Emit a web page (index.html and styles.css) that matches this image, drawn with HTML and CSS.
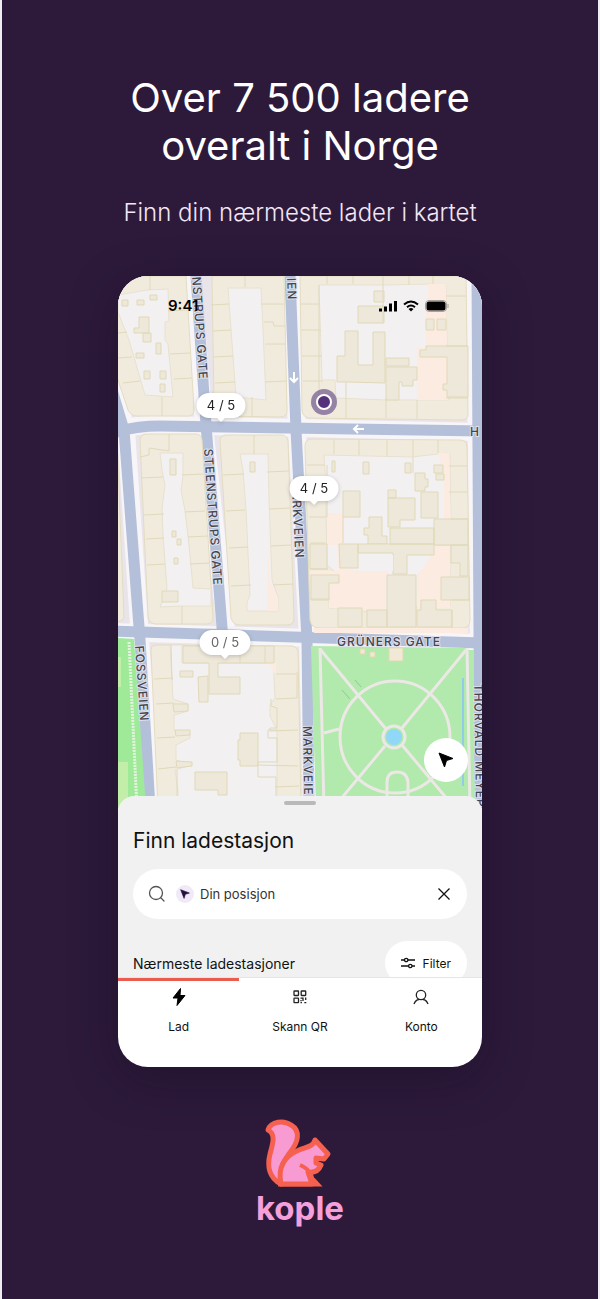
FILE: index.html
```html
<!DOCTYPE html>
<html lang="no">
<head>
    <meta charset="UTF-8">
    <meta name="viewport" content="width=device-width, initial-scale=1.0">
    <title>Kople - Over 7 500 ladere overalt i Norge</title>
    <link rel="stylesheet" href="styles.css">
</head>
<body>
    <main class="poster">
        <header class="intro">
            <h1>Over 7 500 ladere<br>overalt i Norge</h1>
            <p>Finn din nærmeste lader i kartet</p>
        </header>

        <section class="phone">
            <div class="map">
                <svg class="map-canvas" viewBox="118 276 364 532" aria-label="Kart">
                    <!-- ground and streets -->
                    <rect x="118" y="276" width="364" height="532" fill="#e9e4ea"/>
                    <g fill="none" stroke="#f8f5f8" stroke-width="18">
                        <path d="M192 276L204 425L227 640"/>
                        <path d="M291 276L297 430L308 640L312 808"/>
                        <path d="M112 380L126 430L140 640L153 808"/>
                        <path d="M110 432Q135 424 160 425L482 432"/>
                        <path d="M110 632L482 643"/>
                        <path d="M475 276L479 650"/>
                    </g>
                    <g fill="none" stroke="#b4c0d9" stroke-width="11">
                        <path d="M196 276L206 425L223 640"/>
                        <path d="M290 276L296 430L307 640L309 808"/>
                        <path d="M112 390L124 430L140 640L150 808"/>
                        <path d="M110 434Q132 426 160 426L482 431"/>
                        <path d="M110 631L482 643"/>
                        <path d="M477 276L480 808"/>
                    </g>

                    <!-- city blocks -->
                    <g fill="#f1ebde" stroke="#e3dcc0" stroke-width="1">
                        <path d="M116 276H186L194 409Q194 416 188 416H137Q131 416 128 410L116 374Z"/>
                        <path d="M212 276H284L287 410Q287 417 280 417L222 416Q215 415 214 406Z"/>
                        <path d="M300 276H466L468 414Q468 420 461 420L309 418Q303 417 302 411Z"/>
                        <path d="M140 440Q140 434 147 434H196Q201 434 202 440L213 618Q213 624 206 624H156Q149 624 148 616Z"/>
                        <path d="M220 441Q220 435 227 435H281Q287 435 288 441L294 618Q294 625 287 625H240Q233 625 231 618Z"/>
                        <path d="M305 446Q305 439 312 439L460 440Q467 440 467 447L470 620Q470 628 462 628H320Q311 628 310 620Z"/>
                        <path d="M151 650Q151 645 157 645L292 646Q298 647 298 653L301 808H158Z"/>
                        <path d="M112 440H117L124 617Q124 622 112 622Z"/>
                    </g>

                    <!-- courtyards -->
                    <g fill="#f3f0f2" stroke="#e8e1d0" stroke-width="1">
                        <path d="M118 295L147 290L168 289L169 321L165 322V340L168 344L173 397L145 395L129 340L118 312Z"/>
                        <path d="M228 288H261L263 330L266 400L236 397Z"/>
                        <path d="M319 285H388L428 284L446 285L448 392L449 400H416L386 400L336 398L335 380H322Z"/>
                        <path d="M160 453H183V476L181 490L185 511L189 545L193 588L211 589V606L180 606L160 607L167 589L163 535L162 509L165 485L162 470Z"/>
                        <path d="M240 454H268L269 500L272 580L278 597V611H247V602L250 595L246 510L243 470Z"/>
                        <path d="M324 455L412 457L438 454L448 453L450 455L451 525L434 530V545L450 546V606H435V598H420L416 609L387 613H384L329 608V583L340 576L327 565L326 510L326 490Z"/>
                        <path d="M170 645H182V663H274V678L275 698L270 705V716L277 730V806H178V790L175 770L191 765L176 760V745L190 738V733L174 730V715L188 711L188 704L173 699L172 680Z"/>
                    </g>
                    <g fill="#fcebe0">
                        <path d="M428 284H446L448 400H417V348H426V308H428Z"/>
                        <path d="M438 453H449L451 528H444V475Z"/>
                        <path d="M327 513H343V542L340 568L386 575V612L329 608V583L338 580V545H327Z"/>
                        <path d="M434 546H450V608H434V600H420V610H417V575L430 558Z"/>
                        <path d="M310 571H388V578H311Z"/>
                        <path d="M268 545L270 580L278 598V611H267Z"/>
                        <path d="M267 662H276V675Z"/>
                        <path d="M313 628H468V633H314Z"/>
                    </g>
                    <g fill="#eee8da" stroke="#e0d9b8" stroke-width="1">
                        <path d="M122 300h6v6h-6ZM137 300h7v5h-7ZM150 295h7v5h-7ZM139 317h10v16h-15v-5h5ZM143 333h8v9h-8ZM156 343h5v11h-5ZM136 353h8v5h-8ZM144 371h6v8h-6ZM160 371h6v8h-6ZM160 384h5v8h-5Z"/>
                        <path d="M374 291h10v11h-10ZM358 306h26v17h-26ZM345 331h13v34h15v-33h12v51l-39-1h-9v-26h8ZM386 358h23v8h-23ZM386 367h31v13h-4v6h-11v-4h-3v18h-13ZM426 319h8v11h-8ZM437 319h9v11h-9ZM420 357v-7h6v-4h42v51h-21v-7h-4v-6h4v-27Z"/>
                        <path d="M170 459h6v16h-6ZM172 531h4v6h-4ZM177 539h4v6h-4ZM174 558h4v6h-4ZM162 591h16v11h-16ZM250 462h5v10h-5Z"/>
                        <path d="M332 461h3v11h-3ZM363 462h6v12h-6ZM405 463h6v10h-6ZM343 491h17v26h-17ZM388 490h8v8h-8ZM388 498h27v22h-15v7h-12ZM421 492h17v26h-17ZM415 473h10v6h3v8h-3v4h-10ZM434 465h9v8h-9ZM436 474h8v6h-8ZM369 517h13v19h5v8h-19v-9h-4v-7h5Z"/>
                        <path d="M358 544h76v11h-27v19h-14v-21h-35ZM339 544h19v24h-18ZM310 544h17v25h-17ZM387 575h29v52h-29ZM390 528h44v16h-44ZM434 519h34v26h-34ZM451 545h17v31h-8v-13h-9ZM441 577h28v23h-28ZM311 575h28v8h-10v17h-18ZM338 608h24v19h-24ZM367 610h20v17h-20ZM421 600h15v10h16v17h-35v-17h4Z"/>
                        <path d="M180 671h13v6h-13ZM183 646h91v17h-56v14h22v17h-31v-31h-26ZM198 677l10-1v26h-9ZM240 733h18v33h-18v-6h-2v-20h2ZM195 772h32v23h-9v-5h-23ZM173 704h15v7l-14 1ZM175 730h15v5l-14 1ZM176 761l16 1v4l-15 2Z"/>
                    </g>
                    <g fill="#f3f0f2">
                        <path d="M359 555h34v16h-34ZM408 556h22l-7 14h-15Z"/>
                    </g>

                    <!-- plot boundaries -->
                    <g fill="none" stroke="#e0d9ba" stroke-width="1">
                        <path d="M150 276v14M118 333L127 332M118 358L132 357M123 383L140 381M168 311L188 310M170 354L190 353M174 379L192 378M162 397v19M245 276v11M261 304L284 304M211 305L229 304M212 331L231 330M213 357L233 356M215 383L235 382M264 322h9l1 4h11M265 344h20M265 382l22-1M252 397v20"/>
                        <path d="M300 304h20M301 330h20M302 356h20M303 381h20M319 285v113M327 276v8M353 276v8M383 276v46M409 276v9M433 276v8M446 296h20M446 346h22M346 382v36M386 398v20M417 400v19M446 398h22"/>
                        <path d="M169 434v17l-20-3v7l-9 2M141 478l22-1M144 515l20-1M146 539l18-1M147 565l18-1M182 475l21-1M185 512l20-1M188 537l20-1M190 564l20-1M182 606v18M254 435v19M223 475l21-1M226 511l19-1M229 548l19-1M231 586l20-1M267 472l22-1M269 509l21-1M271 546l20-1M273 585l20-1"/>
                        <path d="M334 440v14M359 440v15M387 440v16M413 440v33M438 440v13M307 465h18M309 489h17M309 517h17M310 543h15M310 569h18M449 466h18M449 492h19M451 519h17M311 599h18M452 600h18M452 610v18M327 465v52M343 517v26"/>
                        <path d="M171 645l1 35M240 646v17M265 646v17M154 679l19-1M156 704l18-1M157 738l18-1M158 769l18-2M276 674h20M276 699l21-1v-26M271 699v7l6 2v20h-7v3l28-1M258 765l40 1M275 787l24-1M177 770v37M277 730h-9v8h9v24h-19v15h18v30"/>
                    </g>

                    <!-- park -->
                    <path d="M311 646L467 648L476 808H316Z" fill="#b2e9ac"/>
                    <path d="M468 650h6v158h-3Z" fill="#b2e9ac"/>
                    <path d="M118 638L134 639L146 808H118Z" fill="#9fea98"/>
                    <path d="M118 762h10v46h-10ZM118 657h3v30h-3Z" fill="#c2eeaa"/>
                    <g fill="none" stroke="#ece8e6" stroke-width="3">
                        <path d="M320 649L386 729M402 745L448 800M466 650L402 728M385 746L340 800"/>
                        <path d="M320 648L324 808M467 648L470 808M324 733L339 729"/>
                        <ellipse cx="395" cy="737" rx="55" ry="56"/>
                        <circle cx="394" cy="737" r="11"/>
                        <path d="M387 800V782Q387 772 397 772Q407 772 408 782V800"/>
                    </g>
                    <path d="M129 642L137 808" fill="none" stroke="#e4f3dd" stroke-width="3" stroke-dasharray="2 1"/>
                    <circle cx="394" cy="737" r="8" fill="#91d8f8"/>
                    <path d="M463 678V786" stroke="#91cde8" stroke-width="2"/>
                    <path d="M342 690l8 9M355 680l6 7" stroke="#92c794" stroke-width="1"/>
                    <path d="M389 648h14v13h-14ZM360 649h5v5h-5ZM370 652h5v5h-5Z" fill="#f0e9d7" stroke="#e3d9ad"/>

                    <!-- one-way arrows -->
                    <path d="M294 372V382M290 378L294 382L298 378M364 429H354M358 425L354 429L358 433" fill="none" stroke="#fff" stroke-width="2"/>

                    <!-- street names -->
                    <g class="street">
                        <text transform="translate(192 277) rotate(86)">NSTRUPS GATE</text>
                        <text transform="translate(204 449) rotate(86)">STEENSTRUPS GATE</text>
                        <text transform="translate(287 278) rotate(88)">IEN</text>
                        <text transform="translate(292 491) rotate(87)">ARKVEIEN</text>
                        <text transform="translate(135 646) rotate(86)">FOSSVEIEN</text>
                        <text transform="translate(303 726) rotate(89)">MARKVEIEN</text>
                        <text transform="translate(474 684) rotate(89)">THORVALD MEYER</text>
                        <text x="337" y="646">GRÜNERS GATE</text>
                        <text x="470" y="436">H</text>
                    </g>

                    <!-- current position -->
                    <circle cx="324" cy="402" r="13" fill="#6f568d" fill-opacity=".7"/>
                    <circle cx="324" cy="402" r="7" fill="#55307b" stroke="#fff" stroke-width="2"/>

                    <!-- charger pins -->
                    <g class="pin">
                        <path d="M209 393H233A12.500 12.500 0 0 1 233 418H225L221 422L217 418H209A12.500 12.500 0 0 1 209 393Z"/>
                        <text x="221" y="410">4 / 5</text>
                    </g>
                    <g class="pin">
                        <path d="M302 476H326A12.500 12.500 0 0 1 326 501H318L314 505L310 501H302A12.500 12.500 0 0 1 302 476Z"/>
                        <text x="314" y="493">4 / 5</text>
                    </g>
                    <g class="pin pin-busy">
                        <path d="M212 630H238A12.500 12.500 0 0 1 238 655H229L225 659L221 655H212A12.500 12.500 0 0 1 212 630Z"/>
                        <text x="225" y="647">0 / 5</text>
                    </g>
                </svg>

                <div class="status-bar">
                    <span class="clock">9:41</span>
                    <svg width="70" height="12" viewBox="0 0 70 12" aria-hidden="true">
                        <path d="M0 8.500h3v3H0ZM5 6.500h3v5H5ZM10 3.500h3v8h-3ZM15 1h3v10.500h-3Z"/>
                        <path d="M25 4.500Q32 -1.500 39 4.500M28 7.300Q32 3.800 36 7.300" fill="none" stroke="#000" stroke-width="2"/>
                        <path d="M29.500 9Q32 7 34.500 9L32 11.500Z"/>
                        <rect x="46.500" y=".5" width="21" height="11" rx="3.500" fill="none" stroke="#a8a29c"/>
                        <rect x="47.500" y="1.500" width="19" height="9" rx="2.500"/>
                        <path d="M69 4v4" stroke="#a8a29c"/>
                    </svg>
                </div>

                <button class="locate" type="button" aria-label="Min posisjon">
                    <svg width="16" height="16" viewBox="0 0 16 16" aria-hidden="true">
                        <path d="M1 1L15 6.500L8.500 8.500L6.500 15Z" stroke="#000" stroke-width="1" stroke-linejoin="round"/>
                    </svg>
                </button>
            </div>

            <div class="sheet">
                <span class="handle"></span>
                <h2>Finn ladestasjon</h2>
                <div class="search">
                    <svg width="18" height="18" viewBox="0 0 18 18" aria-hidden="true">
                        <circle cx="8" cy="8" r="6.500" fill="none" stroke="#555" stroke-width="1.300"/>
                        <path d="M13 13L16 16" stroke="#555" stroke-width="1.300" stroke-linecap="round"/>
                    </svg>
                    <span class="position-icon">
                        <svg width="10" height="10" viewBox="0 0 16 16" aria-hidden="true">
                            <path d="M1 1L15 6.500L8.500 8.500L6.500 15Z" fill="#24103c" stroke="#24103c" stroke-linejoin="round"/>
                        </svg>
                    </span>
                    <input type="text" value="Din posisjon" aria-label="Søk etter sted">
                    <button class="clear" type="button" aria-label="Tøm søk">
                        <svg width="12" height="12" viewBox="0 0 12 12" aria-hidden="true">
                            <path d="M.5 .5L11.500 11.500M11.500 .5L.5 11.500" stroke="#111" stroke-width="1.300"/>
                        </svg>
                    </button>
                </div>
                <div class="nearest">
                    <h3>Nærmeste ladestasjoner</h3>
                    <button class="filter" type="button">
                        <svg width="14" height="12" viewBox="0 0 14 12" fill="none" stroke="#111" stroke-width="1.300" aria-hidden="true">
                            <path d="M0 3H3.500M7 3H14M0 9H7.500M11 9H14"/>
                            <circle cx="5.200" cy="3" r="1.700"/>
                            <circle cx="9.300" cy="9" r="1.700"/>
                        </svg>
                        Filter
                    </button>
                </div>
            </div>

            <nav class="tabs">
                <a class="tab active" href="#lad">
                    <svg width="18" height="18" viewBox="0 0 18 18" aria-hidden="true">
                        <path d="M10.500 .5L3 10H8L7 17.500L15 7.500H10Z" stroke="#000" stroke-linejoin="round"/>
                    </svg>
                    Lad
                </a>
                <a class="tab" href="#qr">
                    <svg width="18" height="18" viewBox="0 0 18 18" fill="none" stroke="#222" stroke-width="1.300" aria-hidden="true">
                        <rect x="3" y="3" width="4.500" height="4.500" rx=".5"/>
                        <rect x="10.200" y="3" width="4.500" height="4.500" rx=".5"/>
                        <rect x="3" y="10.200" width="4.500" height="4.500" rx=".5"/>
                        <path d="M9.500 10.200H12V13M9.500 14.700H11M10 12V13.200M14.700 9.500V12M13.300 14.700H15.300"/>
                    </svg>
                    Skann QR
                </a>
                <a class="tab" href="#konto">
                    <svg width="18" height="18" viewBox="0 0 18 18" fill="none" stroke="#222" stroke-width="1.300" aria-hidden="true">
                        <circle cx="9" cy="7" r="4.700"/>
                        <path d="M2 16Q3.500 11.800 7 11.500M16 16Q14.500 11.800 11 11.500"/>
                    </svg>
                    Konto
                </a>
            </nav>
        </section>

        <footer class="brand">
            <svg width="70" height="70" viewBox="263 1118 70 70" aria-hidden="true">
                <g fill="#f99bd3" stroke="#f6604f" stroke-width="5" stroke-linejoin="round">
                    <path d="M268 1130C271 1121 284 1120 291 1125C301 1131 298 1142 291 1151C285 1159 279 1167 281 1184C269 1178 267 1166 270 1154C273 1143 276 1134 268 1130Z"/>
                    <path d="M281 1184C277 1165 287 1155 299 1150C306 1147 313 1147 315 1140L328 1154L324 1159L316 1158L316 1163L321 1165C319 1170 315 1173 308 1172L312 1184Z"/>
                </g>
                <path d="M278 1184.500H318L313 1179" fill="none" stroke="#f6604f" stroke-width="4"/>
                <path d="M312 1184C314 1174 307 1168 300 1165" fill="none" stroke="#f6604f" stroke-width="4"/>
            </svg>
            <span>kople</span>
        </footer>
    </main>
</body>
</html>
```
FILE: styles.css
```css
* {
    margin: 0;
    padding: 0;
    box-sizing: border-box;
}

body {
    background: #2d1a3b;
    color: #111;
    font-family: 'Inter', sans-serif;
    min-height: 100vh;
}

.poster {
    min-height: 100vh;
    border: solid #efedf0;
    border-width: 0 2px;
    display: flex;
    flex-direction: column;
    align-items: center;
    padding: 74px 20px 0;
}

.intro {
    color: #fff;
    text-align: center;
}

h1 {
    font-size: 40px;
    font-weight: 400;
    line-height: 48px;
}

.intro p {
    color: #f2e7f7;
    font-size: 24px;
    font-weight: 300;
    line-height: 32px;
    margin-top: 27px;
}

.phone {
    background: #fff;
    width: 100%;
    max-width: 364px;
    margin-top: 47px;
    border-radius: 30px;
    overflow: hidden;
    box-shadow: 0 12px 48px rgba(20, 8, 30, 0.4);
}

.map {
    position: relative;
}

.map-canvas {
    display: block;
    width: 100%;
}

.street {
    fill: #454550;
    stroke: #dfe2ec;
    stroke-width: 2px;
    paint-order: stroke;
    font-size: 12px;
    font-weight: 500;
    letter-spacing: 1px;
}

.pin {
    fill: #fff;
    filter: drop-shadow(0 1px 2px rgba(0, 0, 0, 0.2));
}

.pin text {
    fill: #222;
    font-size: 13px;
    text-anchor: middle;
}

.pin-busy text {
    fill: #666;
}

.status-bar {
    position: absolute;
    top: 20px;
    left: 0;
    right: 0;
    display: flex;
    justify-content: space-between;
    align-items: center;
    padding: 0 33px 0 50px;
}

.clock {
    color: #000;
    font-size: 15px;
    font-weight: 600;
    line-height: 20px;
}

.locate {
    position: absolute;
    right: 14px;
    bottom: 26px;
    width: 44px;
    height: 44px;
    border: none;
    border-radius: 50%;
    background: #fff;
    display: flex;
    justify-content: center;
    align-items: center;
}

.sheet {
    position: relative;
    background: #f1f1f1;
    height: 181px;
    margin-top: -12px;
    padding: 5px 15px 0;
    border-radius: 16px 16px 0 0;
    overflow: hidden;
}

.handle {
    display: block;
    width: 32px;
    height: 4px;
    margin: 0 auto;
    border-radius: 2px;
    background: #b9b9b9;
}

h2 {
    font-size: 21px;
    font-weight: 400;
    line-height: 28px;
    margin-top: 22px;
}

.search {
    display: flex;
    align-items: center;
    height: 50px;
    margin-top: 14px;
    padding: 0 15px;
    border-radius: 25px;
    background: #fff;
}

.position-icon {
    display: flex;
    justify-content: center;
    align-items: center;
    width: 18px;
    height: 18px;
    margin: 0 6px 0 10px;
    border-radius: 50%;
    background: #f1e9f8;
}

.search input {
    flex: 1;
    min-width: 0;
    border: none;
    outline: none;
    background: none;
    color: #333;
    font-family: inherit;
    font-size: 13px;
}

.clear {
    display: flex;
    padding: 2px;
    border: none;
    background: none;
}

.nearest {
    display: flex;
    justify-content: space-between;
    align-items: center;
    margin-top: 22px;
}

h3 {
    font-size: 14px;
    font-weight: 400;
}

.filter {
    display: flex;
    align-items: center;
    gap: 8px;
    height: 44px;
    padding: 0 16px;
    border: none;
    border-radius: 22px;
    background: #fff;
    color: #111;
    font-family: inherit;
    font-size: 12px;
}

.tabs {
    display: grid;
    grid-template-columns: repeat(3, 1fr);
    height: 90px;
    border-top: 1px solid #e5e5e5;
}

.tab {
    display: flex;
    flex-direction: column;
    align-items: center;
    gap: 13px;
    padding-top: 10px;
    color: #111;
    font-size: 12px;
    line-height: 16px;
    text-decoration: none;
}

.active {
    box-shadow: inset 0 3px #ea5b50;
}

.brand {
    display: flex;
    flex-direction: column;
    align-items: center;
    margin-top: 51px;
    color: #f5a0da;
    font-size: 33px;
    font-weight: 700;
    line-height: 40px;
}

.brand svg {
    margin-right: 4px;
}
```
